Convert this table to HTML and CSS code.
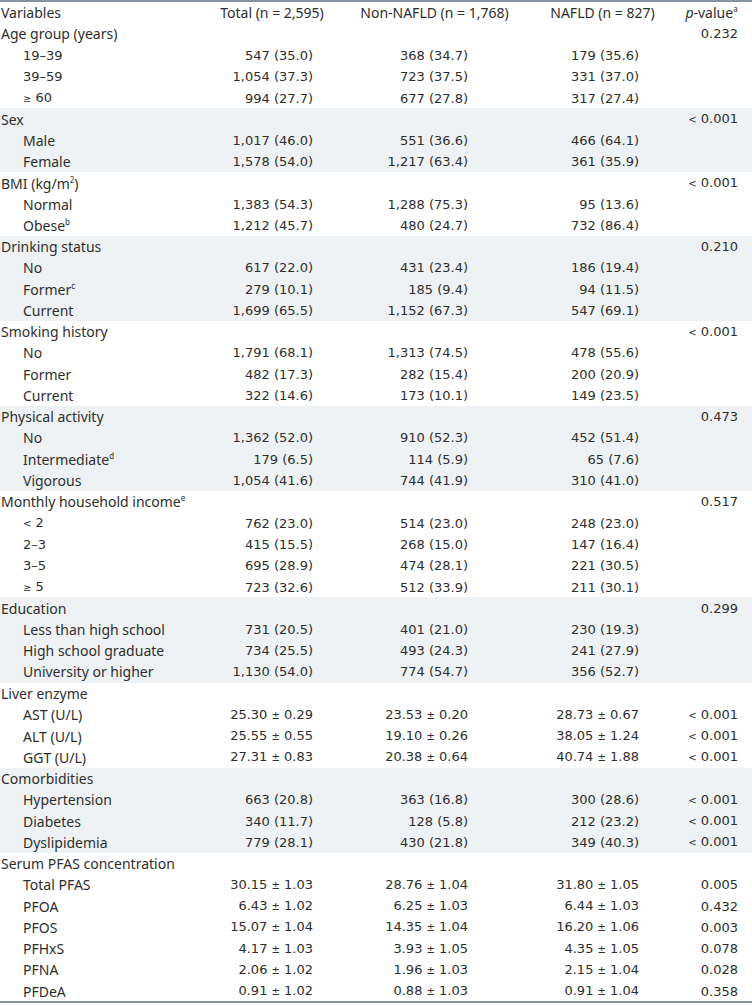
FILE: index.html
```html
<!DOCTYPE html>
<html lang="en">
<head>
<meta charset="utf-8">
<title>Characteristics by NAFLD status</title>
<link rel="stylesheet" href="styles.css">
</head>
<body>
<div class="tbl">
  <div class="row head">
    <div class="c1">Variables</div>
    <div class="c2">Total (n = 2,595)</div>
    <div class="c3">Non-NAFLD (n = 1,768)</div>
    <div class="c4">NAFLD (n = 827)</div>
    <div class="c5"><i>p</i>-value<sup>a</sup></div>
  </div>

  <div class="grp">
    <div class="row"><div class="c1">Age group (years)</div><div class="c2"></div><div class="c3"></div><div class="c4"></div><div class="c5">0.232</div></div>
    <div class="row sub"><div class="c1 num">19–39</div><div class="c2">547 (35.0)</div><div class="c3">368 (34.7)</div><div class="c4">179 (35.6)</div><div class="c5"></div></div>
    <div class="row sub"><div class="c1 num">39–59</div><div class="c2">1,054 (37.3)</div><div class="c3">723 (37.5)</div><div class="c4">331 (37.0)</div><div class="c5"></div></div>
    <div class="row sub"><div class="c1 num"><span class="lt">≥</span> 60</div><div class="c2">994 (27.7)</div><div class="c3">677 (27.8)</div><div class="c4">317 (27.4)</div><div class="c5"></div></div>
  </div>

  <div class="grp shaded">
    <div class="row"><div class="c1">Sex</div><div class="c2"></div><div class="c3"></div><div class="c4"></div><div class="c5"><span class="lt">&lt;</span> 0.001</div></div>
    <div class="row sub"><div class="c1">Male</div><div class="c2">1,017 (46.0)</div><div class="c3">551 (36.6)</div><div class="c4">466 (64.1)</div><div class="c5"></div></div>
    <div class="row sub"><div class="c1">Female</div><div class="c2">1,578 (54.0)</div><div class="c3">1,217 (63.4)</div><div class="c4">361 (35.9)</div><div class="c5"></div></div>
  </div>

  <div class="grp">
    <div class="row"><div class="c1">BMI (kg/m<sup>2</sup>)</div><div class="c2"></div><div class="c3"></div><div class="c4"></div><div class="c5"><span class="lt">&lt;</span> 0.001</div></div>
    <div class="row sub"><div class="c1">Normal</div><div class="c2">1,383 (54.3)</div><div class="c3">1,288 (75.3)</div><div class="c4">95 (13.6)</div><div class="c5"></div></div>
    <div class="row sub"><div class="c1">Obese<sup>b</sup></div><div class="c2">1,212 (45.7)</div><div class="c3">480 (24.7)</div><div class="c4">732 (86.4)</div><div class="c5"></div></div>
  </div>

  <div class="grp shaded">
    <div class="row"><div class="c1">Drinking status</div><div class="c2"></div><div class="c3"></div><div class="c4"></div><div class="c5">0.210</div></div>
    <div class="row sub"><div class="c1">No</div><div class="c2">617 (22.0)</div><div class="c3">431 (23.4)</div><div class="c4">186 (19.4)</div><div class="c5"></div></div>
    <div class="row sub"><div class="c1">Former<sup>c</sup></div><div class="c2">279 (10.1)</div><div class="c3">185 (9.4)</div><div class="c4">94 (11.5)</div><div class="c5"></div></div>
    <div class="row sub"><div class="c1">Current</div><div class="c2">1,699 (65.5)</div><div class="c3">1,152 (67.3)</div><div class="c4">547 (69.1)</div><div class="c5"></div></div>
  </div>

  <div class="grp">
    <div class="row"><div class="c1">Smoking history</div><div class="c2"></div><div class="c3"></div><div class="c4"></div><div class="c5"><span class="lt">&lt;</span> 0.001</div></div>
    <div class="row sub"><div class="c1">No</div><div class="c2">1,791 (68.1)</div><div class="c3">1,313 (74.5)</div><div class="c4">478 (55.6)</div><div class="c5"></div></div>
    <div class="row sub"><div class="c1">Former</div><div class="c2">482 (17.3)</div><div class="c3">282 (15.4)</div><div class="c4">200 (20.9)</div><div class="c5"></div></div>
    <div class="row sub"><div class="c1">Current</div><div class="c2">322 (14.6)</div><div class="c3">173 (10.1)</div><div class="c4">149 (23.5)</div><div class="c5"></div></div>
  </div>

  <div class="grp shaded">
    <div class="row"><div class="c1">Physical activity</div><div class="c2"></div><div class="c3"></div><div class="c4"></div><div class="c5">0.473</div></div>
    <div class="row sub"><div class="c1">No</div><div class="c2">1,362 (52.0)</div><div class="c3">910 (52.3)</div><div class="c4">452 (51.4)</div><div class="c5"></div></div>
    <div class="row sub"><div class="c1">Intermediate<sup>d</sup></div><div class="c2">179 (6.5)</div><div class="c3">114 (5.9)</div><div class="c4">65 (7.6)</div><div class="c5"></div></div>
    <div class="row sub"><div class="c1">Vigorous</div><div class="c2">1,054 (41.6)</div><div class="c3">744 (41.9)</div><div class="c4">310 (41.0)</div><div class="c5"></div></div>
  </div>

  <div class="grp">
    <div class="row"><div class="c1">Monthly household income<sup>e</sup></div><div class="c2"></div><div class="c3"></div><div class="c4"></div><div class="c5">0.517</div></div>
    <div class="row sub"><div class="c1 num"><span class="lt">&lt;</span> 2</div><div class="c2">762 (23.0)</div><div class="c3">514 (23.0)</div><div class="c4">248 (23.0)</div><div class="c5"></div></div>
    <div class="row sub"><div class="c1 num">2–3</div><div class="c2">415 (15.5)</div><div class="c3">268 (15.0)</div><div class="c4">147 (16.4)</div><div class="c5"></div></div>
    <div class="row sub"><div class="c1 num">3–5</div><div class="c2">695 (28.9)</div><div class="c3">474 (28.1)</div><div class="c4">221 (30.5)</div><div class="c5"></div></div>
    <div class="row sub"><div class="c1 num"><span class="lt">≥</span> 5</div><div class="c2">723 (32.6)</div><div class="c3">512 (33.9)</div><div class="c4">211 (30.1)</div><div class="c5"></div></div>
  </div>

  <div class="grp shaded">
    <div class="row"><div class="c1">Education</div><div class="c2"></div><div class="c3"></div><div class="c4"></div><div class="c5">0.299</div></div>
    <div class="row sub"><div class="c1">Less than high school</div><div class="c2">731 (20.5)</div><div class="c3">401 (21.0)</div><div class="c4">230 (19.3)</div><div class="c5"></div></div>
    <div class="row sub"><div class="c1">High school graduate</div><div class="c2">734 (25.5)</div><div class="c3">493 (24.3)</div><div class="c4">241 (27.9)</div><div class="c5"></div></div>
    <div class="row sub"><div class="c1">University or higher</div><div class="c2">1,130 (54.0)</div><div class="c3">774 (54.7)</div><div class="c4">356 (52.7)</div><div class="c5"></div></div>
  </div>

  <div class="grp">
    <div class="row"><div class="c1">Liver enzyme</div><div class="c2"></div><div class="c3"></div><div class="c4"></div><div class="c5"></div></div>
    <div class="row sub"><div class="c1">AST (U/L)</div><div class="c2">25.30 <span class="pm">±</span> 0.29</div><div class="c3">23.53 <span class="pm">±</span> 0.20</div><div class="c4">28.73 <span class="pm">±</span> 0.67</div><div class="c5"><span class="lt">&lt;</span> 0.001</div></div>
    <div class="row sub"><div class="c1">ALT (U/L)</div><div class="c2">25.55 <span class="pm">±</span> 0.55</div><div class="c3">19.10 <span class="pm">±</span> 0.26</div><div class="c4">38.05 <span class="pm">±</span> 1.24</div><div class="c5"><span class="lt">&lt;</span> 0.001</div></div>
    <div class="row sub"><div class="c1">GGT (U/L)</div><div class="c2">27.31 <span class="pm">±</span> 0.83</div><div class="c3">20.38 <span class="pm">±</span> 0.64</div><div class="c4">40.74 <span class="pm">±</span> 1.88</div><div class="c5"><span class="lt">&lt;</span> 0.001</div></div>
  </div>

  <div class="grp shaded">
    <div class="row"><div class="c1">Comorbidities</div><div class="c2"></div><div class="c3"></div><div class="c4"></div><div class="c5"></div></div>
    <div class="row sub"><div class="c1">Hypertension</div><div class="c2">663 (20.8)</div><div class="c3">363 (16.8)</div><div class="c4">300 (28.6)</div><div class="c5"><span class="lt">&lt;</span> 0.001</div></div>
    <div class="row sub"><div class="c1">Diabetes</div><div class="c2">340 (11.7)</div><div class="c3">128 (5.8)</div><div class="c4">212 (23.2)</div><div class="c5"><span class="lt">&lt;</span> 0.001</div></div>
    <div class="row sub"><div class="c1">Dyslipidemia</div><div class="c2">779 (28.1)</div><div class="c3">430 (21.8)</div><div class="c4">349 (40.3)</div><div class="c5"><span class="lt">&lt;</span> 0.001</div></div>
  </div>

  <div class="grp">
    <div class="row"><div class="c1">Serum PFAS concentration</div><div class="c2"></div><div class="c3"></div><div class="c4"></div><div class="c5"></div></div>
    <div class="row sub"><div class="c1">Total PFAS</div><div class="c2">30.15 <span class="pm">±</span> 1.03</div><div class="c3">28.76 <span class="pm">±</span> 1.04</div><div class="c4">31.80 <span class="pm">±</span> 1.05</div><div class="c5">0.005</div></div>
    <div class="row sub"><div class="c1">PFOA</div><div class="c2">6.43 <span class="pm">±</span> 1.02</div><div class="c3">6.25 <span class="pm">±</span> 1.03</div><div class="c4">6.44 <span class="pm">±</span> 1.03</div><div class="c5">0.432</div></div>
    <div class="row sub"><div class="c1">PFOS</div><div class="c2">15.07 <span class="pm">±</span> 1.04</div><div class="c3">14.35 <span class="pm">±</span> 1.04</div><div class="c4">16.20 <span class="pm">±</span> 1.06</div><div class="c5">0.003</div></div>
    <div class="row sub"><div class="c1">PFHxS</div><div class="c2">4.17 <span class="pm">±</span> 1.03</div><div class="c3">3.93 <span class="pm">±</span> 1.05</div><div class="c4">4.35 <span class="pm">±</span> 1.05</div><div class="c5">0.078</div></div>
    <div class="row sub"><div class="c1">PFNA</div><div class="c2">2.06 <span class="pm">±</span> 1.02</div><div class="c3">1.96 <span class="pm">±</span> 1.03</div><div class="c4">2.15 <span class="pm">±</span> 1.04</div><div class="c5">0.028</div></div>
    <div class="row sub"><div class="c1">PFDeA</div><div class="c2">0.91 <span class="pm">±</span> 1.02</div><div class="c3">0.88 <span class="pm">±</span> 1.03</div><div class="c4">0.91 <span class="pm">±</span> 1.04</div><div class="c5">0.358</div></div>
  </div>
</div>
</body>
</html>
```

FILE: styles.css
```css
html, body {
  margin: 0;
  padding: 0;
  background: #ffffff;
}

body {
  font-family: "Noto Sans", "Liberation Sans", sans-serif;
  font-size: 14px;
  color: #2e2e2e;
}

.tbl {
  width: 752px;
  border-top: 2px solid #8593a0;
  border-bottom: 2px solid #8593a0;
}

.shaded {
  background: #eef2f4;
}

.row {
  display: grid;
  grid-template-columns: 200px 144px 181px 155px 72px;
  height: 21.28px;
  align-items: center;
  white-space: nowrap;
  line-height: 21px;
}

.c1 {
  padding-left: 1px;
  text-align: left;
}

.sub .c1 {
  padding-left: 23px;
}

.c1.num {
  font-family: "DejaVu Sans", "Noto Sans", sans-serif;
  font-size: 13px;
}

.c2, .c3, .c4, .c5 {
  text-align: right;
  font-family: "DejaVu Sans", "Noto Sans", sans-serif;
  font-size: 13px;
}

.c2 { padding-right: 31px; }
.c3 { padding-right: 57px; }
.c4 { padding-right: 41px; }
.c5 { padding-right: 14px; }

.head .c2,
.head .c3,
.head .c4,
.head .c5 {
  font-family: "Noto Sans", "Liberation Sans", sans-serif;
  font-size: 14px;
  text-align: center;
  padding-right: 0;
}

.head .c5 {
  padding-right: 9px;
}

sup {
  font-size: 8px;
  line-height: 0;
  vertical-align: 6px;
}

.pm {
  font-size: 10px;
}

.lt {
  font-size: 10px;
}
```
